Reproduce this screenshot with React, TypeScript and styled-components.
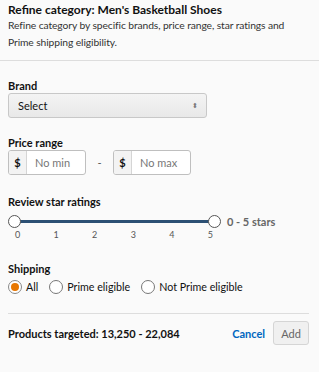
import styled, { createGlobalStyle } from 'styled-components';

const GlobalStyle = createGlobalStyle`
  body {
    margin: 0;
    background: #fafafa;
    font-family: Lato, Roboto, "Liberation Sans", Arial, sans-serif;
    color: #111;
  }
`;

const Panel = styled.div`
  width: 319px;
  height: 372px;
  background: #fafafa;
`;

const Header = styled.header`
  padding: 3px 8px 9px;
  border-bottom: 1px solid #dddddd;
  h1 {
    margin: 0;
    font-size: 12px;
    font-weight: 700;
    line-height: 14px;
    color: #111;
  }
  p {
    margin: 0;
    font-size: 10.3px;
    letter-spacing: -0.1px;
    line-height: 17px;
    color: #333;
  }
`;

const Body = styled.div`
  padding: 18px 8px 0;
`;

const Section = styled.section<{ $gap?: number }>`
  margin-bottom: ${({ $gap }) => $gap ?? 18}px;
`;

const Label = styled.div`
  font-size: 11px;
  font-weight: 700;
  line-height: 14px;
  color: #111;
`;

const SelectBox = styled.div`
  width: 199px;
  height: 25px;
  box-sizing: border-box;
  display: flex;
  align-items: center;
  justify-content: space-between;
  padding: 0 8px 0 9px;
  border: 1px solid #c8c8c8;
  border-radius: 3px;
  background: linear-gradient(#f4f4f4, #e8e8e8);
  font-size: 11px;
  color: #111;
  span {
    font-size: 7px;
    color: #777;
  }
`;

const PriceRow = styled.div`
  display: flex;
  align-items: center;
`;

const Dash = styled.span`
  width: 27px;
  text-align: center;
  font-size: 11px;
  color: #555;
`;

const PriceInput = styled.div`
  width: 78px;
  height: 25px;
  box-sizing: border-box;
  display: flex;
  border: 1px solid #bfbfbf;
  border-radius: 3px;
  background: #fff;
  overflow: hidden;
  font-size: 11px;
`;

const Prefix = styled.span`
  width: 17px;
  display: flex;
  align-items: center;
  justify-content: center;
  background: #f3f3f3;
  border-right: 1px solid #d5d5d5;
  color: #111;
  font-weight: 700;
`;

const Placeholder = styled.span`
  display: flex;
  align-items: center;
  padding-left: 8px;
  color: #777;
`;

const SliderRow = styled.div`
  display: flex;
  align-items: center;
  margin-top: 6px;
`;

const Track = styled.div`
  position: relative;
  width: 213px;
  height: 13px;
`;

const Bar = styled.div`
  position: absolute;
  left: 6px;
  right: 6px;
  top: 5px;
  height: 3px;
  background: #2c5074;
`;

const Thumb = styled.div<{ $left: number }>`
  position: absolute;
  top: 0;
  left: ${({ $left }) => $left}px;
  width: 11px;
  height: 11px;
  border: 1px solid #555;
  border-radius: 50%;
  background: #fff;
`;

const RangeText = styled.span`
  margin-left: 6px;
  font-size: 11px;
  font-weight: 700;
  color: #666;
`;

const Ticks = styled.div`
  display: flex;
  justify-content: space-between;
  width: 198px;
  padding-left: 7px;
  font-size: 9px;
  line-height: 14px;
  color: #555;
`;

const RadioRow = styled.div`
  display: flex;
  align-items: center;
  gap: 11px;
  margin-top: 4px;
  height: 14px;
`;

const RadioOption = styled.label`
  display: flex;
  align-items: center;
  gap: 4px;
  font-size: 10.7px;
  line-height: 14px;
  color: #111;
`;

const RadioDot = styled.span<{ $checked?: boolean }>`
  width: 14px;
  height: 14px;
  box-sizing: border-box;
  border-radius: 50%;
  border: 1px solid ${({ $checked }) => ($checked ? '#888' : '#777')};
  background: #fff;
  display: flex;
  align-items: center;
  justify-content: center;
  &::after {
    content: '';
    width: 8px;
    height: 8px;
    border-radius: 50%;
    background: ${({ $checked }) => ($checked ? '#e77600' : 'transparent')};
  }
`;

const Footer = styled.footer`
  margin: 19px 10px 0 8px;
  padding-top: 7px;
  border-top: 1px solid #dddddd;
  display: flex;
  align-items: center;
  justify-content: space-between;
`;

const Targeted = styled.span`
  font-size: 11px;
  font-weight: 700;
  color: #111;
`;

const Actions = styled.div`
  display: flex;
  align-items: center;
  gap: 8px;
`;

const LinkButton = styled.button`
  background: none;
  border: none;
  padding: 0;
  font: inherit;
  font-size: 11px;
  font-weight: 700;
  color: #0066c0;
`;

const AddButton = styled.button`
  width: 36px;
  height: 24px;
  border: 1px solid #d5d5d5;
  border-radius: 3px;
  background: #f0f0f0;
  font: inherit;
  font-size: 11px;
  color: #666;
`;

const ticks = [0, 1, 2, 3, 4, 5];

export default function App() {
  return (
    <Panel>
      <GlobalStyle />
      <Header>
        <h1>Refine category: Men's Basketball Shoes</h1>
        <p>Refine category by specific brands, price range, star ratings and Prime shipping eligibility.</p>
      </Header>
      <Body>
        <Section>
          <Label>Brand</Label>
          <SelectBox>
            Select <span>⬍</span>
          </SelectBox>
        </Section>
        <Section $gap={20}>
          <Label>Price range</Label>
          <PriceRow>
            <PriceInput>
              <Prefix>$</Prefix>
              <Placeholder>No min</Placeholder>
            </PriceInput>
            <Dash>-</Dash>
            <PriceInput>
              <Prefix>$</Prefix>
              <Placeholder>No max</Placeholder>
            </PriceInput>
          </PriceRow>
        </Section>
        <Section $gap={20}>
          <Label>Review star ratings</Label>
          <SliderRow>
            <Track>
              <Bar />
              <Thumb $left={0} />
              <Thumb $left={200} />
            </Track>
            <RangeText>0 - 5 stars</RangeText>
          </SliderRow>
          <Ticks>
            {ticks.map((t) => (
              <span key={t}>{t}</span>
            ))}
          </Ticks>
        </Section>
        <Section $gap={0}>
          <Label>Shipping</Label>
          <RadioRow>
            <RadioOption>
              <RadioDot $checked />
              All
            </RadioOption>
            <RadioOption>
              <RadioDot />
              Prime eligible
            </RadioOption>
            <RadioOption>
              <RadioDot />
              Not Prime eligible
            </RadioOption>
          </RadioRow>
        </Section>
      </Body>
      <Footer>
        <Targeted>Products targeted: 13,250 - 22,084</Targeted>
        <Actions>
          <LinkButton>Cancel</LinkButton>
          <AddButton>Add</AddButton>
        </Actions>
      </Footer>
    </Panel>
  );
}
